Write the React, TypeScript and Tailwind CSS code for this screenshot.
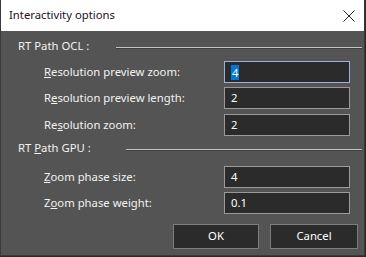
import React from 'react';

interface FieldProps {
  label: React.ReactNode;
  value: string;
  focused?: boolean;
  className?: string;
}

const Field: React.FC<FieldProps> = ({ label, value, focused, className }) => {
  return (
    <div className={`flex items-center h-[22px] ${className ?? ''}`}>
      <div className="w-[223px] pl-[43px] text-[11.3px] text-[#f2f2f2] whitespace-nowrap">{label}</div>
      <div
        className={`w-[126px] h-[22px] bg-[#2b2b2b] border flex items-center pl-[6px] text-[11.3px] text-white ${
          focused ? 'border-[#99b4d9]' : 'border-[#9a9a9a]'
        }`}
      >
        {focused ? <span className="bg-[#0078d7] px-[1px] leading-[15px]">{value}</span> : <span>{value}</span>}
      </div>
    </div>
  );
};

const GroupHeader: React.FC<{ children: React.ReactNode; lineLeft: number; className?: string }> = ({
  children,
  lineLeft,
  className,
}) => {
  return (
    <div className={`flex items-center h-[16px] ${className ?? ''}`}>
      <div
        className="pl-[17px] text-[11.3px] text-[#f2f2f2] whitespace-nowrap shrink-0"
        style={{ width: lineLeft }}
      >
        {children}
      </div>
      <div className="flex-1 mr-[2px] mt-[3px] flex flex-col">
        <div className="h-[1px] bg-[#c4c4c4]" />
        <div className="h-[1px] bg-[#3e3e3e]" />
      </div>
    </div>
  );
};

const App: React.FC = () => {
  return (
    <div
      className="w-[366px] h-[257px] bg-[#2a2a2a] overflow-hidden"
      style={{ fontFamily: '"Noto Sans", "Open Sans", sans-serif' }}
    >
      <div className="w-[365px] h-[256px] bg-[#545454] border-x border-b border-[#3a3a3a] flex flex-col">
        <div className="h-[31px] bg-white flex items-center justify-between pl-[8px] pr-[9px]">
          <span className="text-[11.3px] text-[#1e1028]">Interactivity options</span>
          <svg width="12" height="12" viewBox="0 0 12 12">
            <path d="M0.5 0.5 L11.5 11.5 M11.5 0.5 L0.5 11.5" stroke="#222" strokeWidth="1" />
          </svg>
        </div>

        <GroupHeader lineLeft={115} className="mt-[7px]">RT Path OCL :</GroupHeader>
        <Field className="mt-[7px]" label={<><u>R</u>esolution preview zoom:</>} value="4" focused />
        <Field className="mt-[4px]" label={<>R<u>e</u>solution preview length:</>} value="2" />
        <Field className="mt-[5px]" label={<>Re<u>s</u>olution zoom:</>} value="2" />

        <GroupHeader lineLeft={125} className="mt-[4px]">
          <span>RT <u>P</u>ath GPU :</span>
        </GroupHeader>
        <Field className="mt-[10px]" label={<><u>Z</u>oom phase size:</>} value="4" />
        <Field className="mt-[4px]" label={<>Z<u>o</u>om phase weight:</>} value="0.1" />

        <div className="flex justify-end gap-[11px] mt-[10px] pr-[6px]">
          <button className="w-[86px] h-[25px] bg-[#2b2b2b] border border-[#7d7d7d] text-[11.3px] text-white">OK</button>
          <button className="w-[88px] h-[25px] bg-[#2b2b2b] border border-[#7d7d7d] text-[11.3px] text-white">Cancel</button>
        </div>
      </div>
    </div>
  );
};

export default App;
